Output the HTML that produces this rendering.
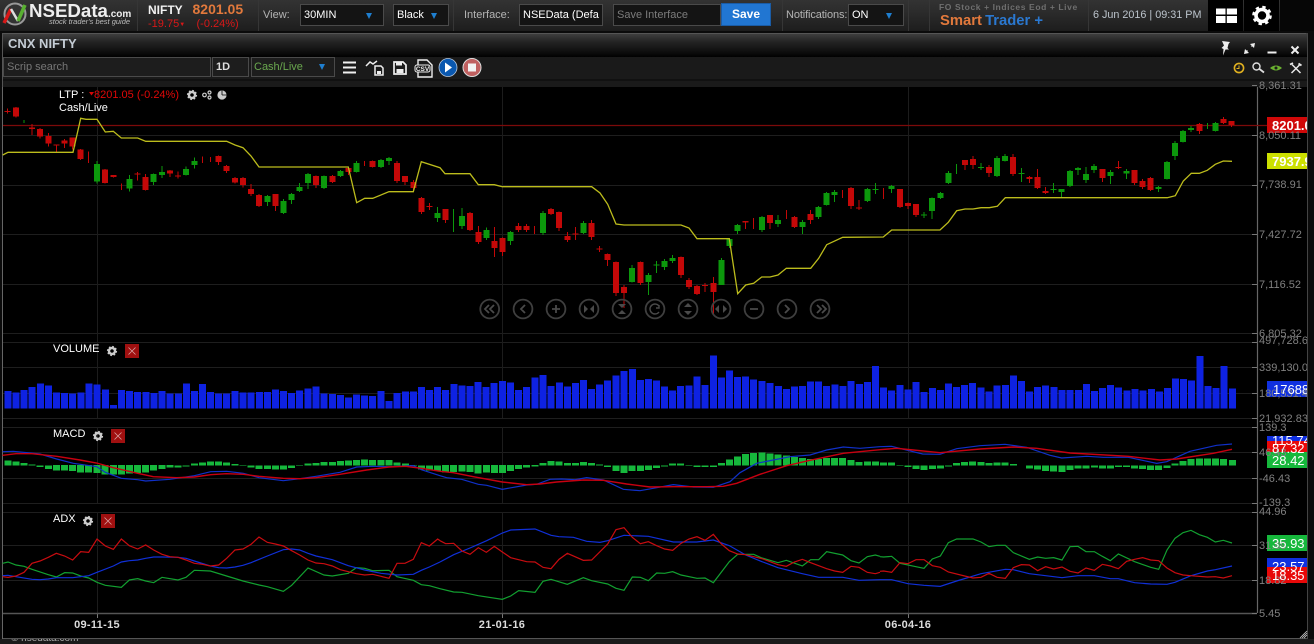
<!DOCTYPE html>
<html>
<head>
<meta charset="utf-8">
<title>NSEData Smart Trader</title>
<style>
html,body{margin:0;padding:0;width:1314px;height:644px;overflow:hidden;background:#0b0b0b;font-family:"Liberation Sans",Arial,sans-serif;font-size:11px;color:#fff}
.a{position:absolute;white-space:nowrap}
#hd{position:absolute;left:0;top:0;width:1314px;height:31px;background:linear-gradient(#333 0,#2a2a2a 45%,#1d1d1d 100%)}
.sep{position:absolute;top:0;width:1px;height:31px;background:#363636}
.box{position:absolute;box-sizing:border-box;background:#141414;border:1px solid #4a4a4a;overflow:hidden;white-space:nowrap;line-height:20px;padding-left:3px;color:#fff;font-size:11px}
.arr{position:absolute;width:0;height:0;border-left:3.5px solid transparent;border-right:3.5px solid transparent;border-top:6px solid #1f7fd0}
.lb{position:absolute;color:#b4b4b4;font-size:11px;line-height:14px;white-space:nowrap}
svg text{font-family:"Liberation Sans",Arial,sans-serif}
</style>
</head>
<body>
<div id="hd"></div>
<div class="sep" style="left:137px"></div>
<div class="sep" style="left:258px"></div>
<div class="sep" style="left:453px"></div>
<div class="sep" style="left:782px"></div>
<div class="sep" style="left:908px"></div>
<div class="sep" style="left:929px"></div>
<div class="sep" style="left:1088px"></div>
<div class="a" style="left:1208px;top:0;width:35px;height:31px;background:#000"></div>
<div class="a" style="left:1244px;top:0;width:35px;height:31px;background:#000"></div>
<div class="a" style="left:1280px;top:0;width:34px;height:31px;background:#060606"></div>

<svg class="a" style="left:0;top:0" width="30" height="30" viewBox="0 0 30 30">
<circle cx="15" cy="14" r="10.5" fill="#333" stroke="#999" stroke-width="2"/>
<path d="M4 23L11 9" stroke="#d81818" stroke-width="3.5" fill="none"/>
<path d="M11 9L18 21" stroke="#ddd" stroke-width="2.5" fill="none"/>
<path d="M18 21L25 5" stroke="#58b030" stroke-width="3.5" fill="none"/>
</svg>
<div class="a" style="left:29px;top:0;font-weight:bold;font-size:18.7px;line-height:22px;color:#eee">NSEData<span style="font-size:10px">.com</span></div>
<div class="a" style="left:49px;top:17px;font-style:italic;font-size:7.5px;line-height:10px;color:#bbb">stock trader's best guide</div>

<div class="a" style="left:148px;top:3px;font-weight:bold;font-size:12px;line-height:14px;color:#f2f2f2">NIFTY</div>
<div class="a" style="left:192.5px;top:1px;font-weight:bold;font-size:14px;line-height:17px;color:#e2793c">8201.05</div>
<div class="a" style="left:148px;top:18px;font-size:11px;line-height:13px;color:#d81818">-19.75<span style="font-size:6px;vertical-align:1px">▼</span></div>
<div class="a" style="left:196.5px;top:18px;font-size:11px;line-height:13px;color:#d81818">(-0.24%)</div>

<div class="lb" style="left:263px;top:8px">View:</div>
<div class="box" style="left:300px;top:4px;width:84px;height:22px">30MIN</div><div class="arr" style="left:366px;top:13px"></div>
<div class="box" style="left:393px;top:4px;width:56px;height:22px">Black</div><div class="arr" style="left:431px;top:13px"></div>
<div class="lb" style="left:464px;top:8px">Interface:</div>
<div class="box" style="left:519px;top:4px;width:84px;height:22px">NSEData (Defa</div>
<div class="box" style="left:613px;top:4px;width:108px;height:22px;color:#7c7c7c">Save Interface</div>
<div class="a" style="left:721px;top:3px;width:50px;height:23px;background:#2176d2;box-sizing:border-box;border:1px solid #1a5ca6;text-align:center;font-weight:bold;font-size:12px;line-height:21px">Save</div>
<div class="lb" style="left:786px;top:8px;letter-spacing:-.12px">Notifications:</div>
<div class="box" style="left:848px;top:4px;width:56px;height:22px">ON</div><div class="arr" style="left:886px;top:13px"></div>

<div class="a" style="left:939px;top:2px;font-size:8.5px;font-weight:bold;line-height:10px;color:#6f6f6f;letter-spacing:.6px">FO Stock + Indices Eod + Live</div>
<div class="a" style="left:940px;top:12px;font-size:14.8px;font-weight:bold;line-height:18px;color:#e2793c">Smart <span style="color:#2a78d0;margin-left:-1px">Trader +</span></div>
<div class="a" style="left:1093px;top:8px;font-size:10.8px;line-height:14px;color:#bcc4cc">6 Jun 2016 | 09:31 PM</div>

<svg class="a" style="left:1208px;top:0" width="72" height="31" viewBox="1208 0 72 31">
<path d="M1216 8.500h9.500v6h-9.500zM1226.800 8.500h10.200v6h-10.200zM1216 16h9.500v7h-9.500zM1226.800 16h10.200v7h-10.200z" fill="#fff"/>
<circle cx="1262" cy="15.500" r="6" fill="none" stroke="#fff" stroke-width="3.600"/>
<circle cx="1262" cy="15.500" r="8.600" fill="none" stroke="#fff" stroke-width="2.400" stroke-dasharray="3.400 3.360"/>
</svg>

<!-- window -->
<div class="a" style="left:2px;top:33px;width:1305px;height:606px;background:#000;box-sizing:border-box;border:1px solid #555;border-right-color:#333"></div>
<div class="a" style="left:3px;top:34px;width:1304px;height:23px;background:linear-gradient(#3e3e3e 0,#262626 30%,#0a0a0a 85%,#000 100%)"></div>
<div class="a" style="left:8px;top:36px;font-weight:bold;font-size:13px;line-height:16px;color:#c4ccd4">CNX NIFTY</div>
<div class="a" style="left:3px;top:57px;width:1304px;height:30px;background:#1a1a1a"></div>
<div class="a" style="left:3px;top:79px;width:1304px;height:2px;background:#111"></div>

<div class="box" style="left:3px;top:57px;width:208px;height:20px;line-height:18px;color:#777;background:#1d1d1d">Scrip search</div>
<div class="box" style="left:212px;top:57px;width:37px;height:20px;line-height:18px;font-weight:bold;color:#ddd;background:#1d1d1d">1D</div>
<div class="box" style="left:251px;top:57px;width:84px;height:20px;line-height:18px;color:#6aa84f;padding-left:2px;background:#1d1d1d">Cash/Live</div><div class="arr" style="left:319px;top:64px"></div>

<svg class="a" style="left:0;top:0" width="1314" height="644" viewBox="0 0 1314 644">
<defs>
<g id="g">
<circle r="3" fill="none" stroke="#ccc" stroke-width="2.400"/>
<circle r="4.400" fill="none" stroke="#ccc" stroke-width="1.400" stroke-dasharray="1.700 1.760"/>
</g>
<g id="x">
<rect width="14" height="14" fill="#a01010"/>
<path d="M3.500 3.500L10.500 10.500M10.500 3.500L3.500 10.500" stroke="#d8a0a0" stroke-width=".8"/>
</g>
</defs>

<!-- toolbar icons -->
<path d="M343 62.500h13M343 67.500h13M343 72.500h13" stroke="#f0f0f0" stroke-width="2"/>
<path d="M366 66l4-4 3 2 4-3" stroke="#eee" stroke-width="1.500" fill="none"/>
<path d="M375 66h6l2 2v7h-8z" fill="none" stroke="#eee" stroke-width="1.500"/><rect x="377" y="71" width="4" height="3" fill="#eee"/>
<path d="M394 62h9l3 3v9h-12z" fill="none" stroke="#eee" stroke-width="1.700"/><rect x="396" y="62" width="6" height="3.500" fill="#eee"/><rect x="396.500" y="69" width="7" height="4" fill="#eee"/>
<path d="M418 60h9l5 5v12h-14z" fill="none" stroke="#eee" stroke-width="1.400"/>
<rect x="415" y="65" width="15" height="7" rx="2" fill="#1a1a1a" stroke="#eee"/>
<text x="422.500" y="71" font-size="6.500" font-weight="bold" fill="#eee" text-anchor="middle">CSV</text>
<circle cx="448" cy="67.500" r="9" fill="#0a58b0" stroke="#b8c8dc" stroke-width=".8"/><path d="M445 62.500l7 5-7 5z" fill="#fff"/>
<circle cx="472" cy="67.500" r="9" fill="#c06060" stroke="#ddd" stroke-width="1"/><rect x="468" y="63.500" width="8" height="8" fill="#f2f2f2"/>

<!-- titlebar icons -->
<path d="M1222 41l8 1-1.500 2-1 4 1.500 1.500-3.500 0-2.500 6 .5-6.500-2-1 2.500-2.500z" fill="#eee"/>
<path d="M1244 54l1-5 4 4zM1255 43l-1 5-4-4z" fill="#eee"/><path d="M1245.500 52.500l2-2M1253.500 44.500l-2 2" stroke="#eee" stroke-width="1.200"/>
<path d="M1267.500 52.500h9" stroke="#eee" stroke-width="2"/>
<path d="M1291.500 46.500l7 7M1298.500 46.500l-7 7" stroke="#eee" stroke-width="2"/>

<!-- right tool icons -->
<circle cx="1239" cy="68" r="4.600" fill="none" stroke="#e0b020" stroke-width="1.600"/><path d="M1239 65.500V68.500H1236.500" stroke="#e0b020" fill="none"/>
<circle cx="1256.500" cy="66.500" r="3.500" fill="none" stroke="#ddd" stroke-width="1.400"/><path d="M1259.500 69l4.500 3.500" stroke="#ddd" stroke-width="1.800"/>
<path d="M1270 68q6-5 12 0q-6 5-12 0z" fill="#6ab030"/><circle cx="1276" cy="68" r="1.500" fill="#1a1a1a"/>
<path d="M1292 64.500l8.500 8.500M1300 64.500l-8.500 8.500" stroke="#e8e8e8" stroke-width="1.500" fill="none"/><path d="M1290 64.500l3-1.500M1298.500 63.500l3 2" stroke="#e8e8e8" stroke-width="1.800"/>

<!-- chart background -->
<rect x="3" y="87" width="1304" height="551" fill="#000"/>
<path d="M3 135.500H1252M3 185.500H1252M3 234.500H1252M3 284.500H1252M3 333.500H1252M3 342.500H1252M3 367.500H1252M3 393.500H1252M3 418.500H1252M3 427.500H1252M3 452.500H1252M3 478.500H1252M3 503.500H1252M3 512.500H1252M3 545.500H1252M3 580.500H1252" stroke="#1e1e1e" stroke-width="1"/>
<path d="M97.500 87V418M97.500 427V503M97.500 512V613M502.500 87V418M502.500 427V503M502.500 512V613M908.500 87V418M908.500 427V503M908.500 512V613" stroke="#1c1c1c" stroke-width="1"/>
<path d="M97.500 613V618M502.500 613V618M908.500 613V618" stroke="#777"/>
<path d="M2.500 87V639" stroke="#666"/>
<path d="M3 613.500H1257" stroke="#555" stroke-width="1.500"/>
<path d="M1257.500 87V613" stroke="#666" stroke-width="1.200"/>
<path d="M1252 85.500h5M1252 135.500h5M1252 185.500h5M1252 234.500h5M1252 284.500h5M1252 333.500h5M1252 342.500h5M1252 367.500h5M1252 393.500h5M1252 418.500h5M1252 427.500h5M1252 452.500h5M1252 478.500h5M1252 503.500h5M1252 512.500h5M1252 545.500h5M1252 580.500h5M1252 613.500h5" stroke="#777"/>

<path d="M3 125.500H1267" stroke="#7c0a0a" stroke-width="1.200"/>

<!-- candles panel 1 -->
<g transform="translate(0,100) scale(.33333)" fill="none" shape-rendering="crispEdges">
<path stroke="#c40808" stroke-width="3" d="M23 25V41M48 21V53M96 72V105M120 84V116M145 99V140M169 133V157M194 117V144M218 112V148M242 147V180M266 155V189M315 207V251M340 225V233M364 251V270M413 216V242M437 222V272M510 210V231M534 214V236M607 170V189M631 171V186M656 167V195M680 195V219M705 231V251M729 231V263M753 252V288M777 282V321M826 282V333M948 226V264M997 225V249M1045 201V225M1094 183V198M1118 181V203M1191 183V249M1215 228V255M1240 240V276M1264 291V342M1288 309V330"/>
<path stroke="#c40808" stroke-width="18" d="M48 22V50M96 82V87M120 87V110M145 108V131M169 133V136M194 122V131M218 113V140M242 148V177M315 209V249M340 225V231M413 221V224M437 231V270M510 212V221M534 226V229M656 168V186M680 198V213M705 234V248M729 234V255M753 267V282M777 285V318M826 282V318M948 228V255M997 228V246M1045 204V216M1118 183V201M1191 189V243M1215 228V246M1240 246V264M1264 294V336M1288 318V321M23 33V36"/>
<path stroke="#0c980c" stroke-width="3" d="M72 60V69M291 183V251M388 225V275M461 220V255M486 198V234M558 200V227M583 173V206M802 285V318M850 297V342M875 279V312M899 249V276M924 219V267M972 226V267M1021 210V231M1069 183V217M1143 177V204M1167 171V195M1313 321V366"/>
<path stroke="#0c980c" stroke-width="18" d="M291 192V245M388 237V266M461 222V246M486 216V225M558 207V225M583 183V195M802 288V306M850 303V339M875 282V300M899 261V273M924 222V249M972 228V264M1021 213V228M1069 189V216M1143 180V201M1167 174V183M1313 339V354"/>
</g>
<!-- candles panel 2 -->
<g transform="translate(440,170) scale(.33333)" fill="none" shape-rendering="crispEdges">
<path stroke="#c40808" stroke-width="3" d="M17 117V159M90 126V183M115 168V222M163 171V261M187 202V258M236 159V186M260 162V186M284 168V192M333 114V135M357 124V183M382 186V216M406 171V210M455 150V210M479 228V246M503 251V288M528 275V378M552 345V414M601 275V345M723 260V324M747 324V357M771 345V375M795 339V366M820 321V432M917 153V177M941 144V177M990 135V177M1039 120V147M1063 138V174M1111 120V162M1208 60V84M1233 51V117M1257 90V120"/>
<path stroke="#c40808" stroke-width="18" d="M17 117V150M90 129V180M115 186V216M163 213V234M187 204V246M236 168V180M260 168V180M333 117V132M357 126V174M382 198V210M406 191V194M455 159V201M479 235V238M503 252V270M528 276V369M552 351V369M601 276V339M723 261V315M747 330V351M771 348V372M795 345V348M820 339V366M917 153V158M990 135V159M1063 141V171M1111 132V150M1233 54V108M1257 112V115"/>
<path stroke="#0c980c" stroke-width="3" d="M41 117V186M66 114V177M139 172V210M212 183V225M309 123V195M430 153V192M576 285V337M625 309V375M649 273V309M674 267V300M698 255V279M844 264V345M868 204V234M893 162V192M966 138V186M1014 135V171M1087 150V192M1136 108V147M1160 66V106M1184 60V96M1282 54V96M1306 39V72"/>
<path stroke="#0c980c" stroke-width="18" d="M66 138V168M139 180V204M212 186V213M309 129V189M430 159V189M576 294V336M625 315V336M649 283V286M674 273V291M698 264V273M844 270V345M868 207V228M893 165V183M966 141V180M1014 150V162M1087 156V171M1136 111V141M1160 69V105M1184 66V75M1282 57V93M1306 57V60"/>
</g>
<!-- candles panel 3 -->
<g transform="translate(880,90) scale(.33333)" fill="none" shape-rendering="crispEdges">
<path stroke="#c40808" stroke-width="3" d="M11 294V327M60 297V354M84 337V357M108 342V381M255 210V240M279 198V237M327 225V261M399 192V258M448 258V279M472 237V297M497 291V312M667 237V276M715 213V237M764 240V285M788 267V297M812 261V303M958 99V132M1030 81V102M1055 93V111"/>
<path stroke="#c40808" stroke-width="18" d="M60 297V351M84 339V348M108 342V375M255 210V225M279 207V225M327 231V249M399 201V252M448 261V267M472 261V294M497 303V309M667 237V264M715 231V234M764 240V279M788 273V291M812 264V300M958 102V123M1030 87V99M1055 93V105"/>
<path stroke="#0c980c" stroke-width="3" d="M35 285V309M132 366V384M156 322V387M181 306V327M205 243V282M229 222V252M303 219V240M351 198V261M375 192V214M424 234V276M521 279V309M545 297V321M570 240V291M594 231V255M618 231V279M642 222V249M691 240V282M740 237V267M836 288V306M861 213V268M885 153V210M909 120V157M933 108V126M982 99V117M1006 96V124"/>
<path stroke="#0c980c" stroke-width="18" d="M35 288V297M132 373V376M156 324V363M181 309V324M205 249V279M303 231V234M351 204V258M375 198V213M424 249V252M521 297V300M545 297V306M570 243V288M594 234V240M618 252V270M642 228V240M691 246V258M740 243V251M836 291V297M861 216V267M885 159V198M909 123V156M933 114V120M1006 99V123"/>
</g>

<!-- yellow line -->
<polyline fill="none" stroke="#bcbc1c" stroke-width="1.300" points="2.700,155 8,152.300 73,152.300 80.700,118.300 86,119.300 97,119.300 105.300,132 113.300,131.300 121.300,138 137.700,138 145.700,141.300 226.700,141.300 235,145 243,147.700 251,156 259,167 348.300,167 356.700,202.700 364.700,198.300 372.700,198.300 389,191.700 413.300,191.700 421.300,161.700 440,167.700 445,173.700 470,173.700 478.300,184.700 494.300,184.700 502.300,186.700 591.700,186.700 600,193 607.700,204.300 616,224 624,225 681,225 689,228 697,238.700 729.300,238.700 737.700,293.700 745.700,285 753.700,283.300 761.700,277 770,277 778,275 786.300,268.300 810.700,268.300 818.700,258.300 826.700,244.700 842.700,237.300 883.300,237 891.700,230 940,230 948.300,222.300 956.700,210.700 965,209 973,209 981,207.700 989.300,207.700 997.300,206.300 1005.300,197.700 1167.300,197.700 1175.300,195.700 1183.300,181 1191.300,173.300 1199.300,173.300 1207.300,170.300 1215.300,164.300 1223.300,161 1232,161.300"/>

<!-- nav buttons -->
<g fill="none" stroke="#3f3f3f" stroke-width="1.800">
<circle cx="489.700" cy="309" r="9.400"/><circle cx="523" cy="309" r="9.400"/><circle cx="556" cy="309" r="9.400"/><circle cx="589" cy="309" r="9.400"/><circle cx="622" cy="309" r="9.400"/><circle cx="655" cy="309" r="9.400"/><circle cx="688" cy="309" r="9.400"/><circle cx="721" cy="309" r="9.400"/><circle cx="754" cy="309" r="9.400"/><circle cx="787" cy="309" r="9.400"/><circle cx="820" cy="309" r="9.400"/>
<path stroke="#4a4a4a" d="M489 305l-4 4 4 4M494 305l-4 4 4 4M525 305l-4 4 4 4M556 305v8M552 309h8M750 309h8M785 305l4 4-4 4M817 305l4 4-4 4M822 305l4 4-4 4"/>
<path stroke="#4a4a4a" stroke-width="1.400" d="M659 306a5 5 0 1 0 0 6M659 305v3h-3"/>
</g>
<g fill="#4a4a4a">
<path d="M584 305l4 4-4 4zM594 305l-4 4 4 4zM618 304h8l-4 4zM618 314h8l-4-4zM684 307l4-4 4 4zM684 311l4 4 4-4zM719 305l-4 4 4 4zM723 305l4 4-4 4z"/>
</g>

<!-- volume -->
<g transform="translate(0,335) scale(.33333)" fill="none" stroke="#0e22e2" stroke-width="21" shape-rendering="crispEdges">
<path d="M24 220V168M48 220V173M72 220V165M96 220V156M121 220V146M145 220V152M170 220V173M194 220V174M218 220V176M243 220V173M267 220V145M291 220V148M316 220V163M340 220V210M365 220V165M389 220V168M413 220V171M438 220V171M462 220V174M486 220V168M510 220V175M535 220V175M559 220V145M583 220V168M608 220V147M632 220V171M656 220V175M680 220V176M705 220V168M729 220V172M753 220V173M778 220V171M802 220V171M826 220V163M851 220V168M875 220V174M899 220V167M924 220V160M948 220V155M972 220V176M997 220V177M1021 220V180M1045 220V187M1069 220V178M1094 220V181M1118 220V183M1143 220V168M1167 220V198M1191 220V174M1216 220V170M1240 220V170M1264 220V156M1288 220V165M1313 220V156"/>
</g>
<g transform="translate(440,335) scale(.33333)" fill="none" stroke="#0e22e2" stroke-width="21" shape-rendering="crispEdges">
<path d="M17 220V165M42 220V147M66 220V152M90 220V153M114 220V141M138 220V156M162 220V144M187 220V138M211 220V142M236 220V165M260 220V156M285 220V127M309 220V120M333 220V153M358 220V142M382 220V155M406 220V144M430 220V135M455 220V162M479 220V148M503 220V137M528 220V121M552 220V108M577 220V102M601 220V135M625 220V132M650 220V137M674 220V155M698 220V167M722 220V153M747 220V152M771 220V124M795 220V150M820 220V62M844 220V127M868 220V106M893 220V126M917 220V125M941 220V133M966 220V138M990 220V144M1015 220V153M1039 220V162M1063 220V154M1087 220V153M1112 220V139M1136 220V140M1160 220V153M1185 220V149M1209 220V153M1233 220V138M1258 220V147M1282 220V141M1307 220V93"/>
</g>
<g transform="translate(880,335) scale(.33333)" fill="none" stroke="#0e22e2" stroke-width="21" shape-rendering="crispEdges">
<path d="M11 220V157M35 220V167M60 220V150M84 220V163M108 220V141M132 220V171M157 220V159M181 220V165M205 220V145M230 220V156M254 220V150M278 220V144M303 220V157M327 220V170M351 220V151M376 220V150M400 220V121M424 220V138M449 220V170M473 220V156M497 220V152M522 220V156M546 220V165M570 220V165M595 220V165M619 220V147M643 220V168M668 220V159M692 220V150M716 220V157M741 220V166M765 220V162M789 220V166M814 220V162M838 220V170M862 220V159M887 220V131M911 220V132M935 220V136M960 220V63M984 220V153M1008 220V159M1032 220V93M1057 220V161"/>
</g>

<!-- macd histogram -->
<g transform="translate(0,335) scale(.33333)" fill="none" stroke="#16b83c" stroke-width="21" shape-rendering="crispEdges">
<path d="M24 392V377M48 392V380M72 392V384M96 392V388M120 392V396M145 392V402M169 390V406M194 390V407M218 390V408M242 390V412M266 390V413M291 390V414M315 390V418M340 390V418M364 390V418M388 390V416M413 390V414M437 390V412M461 390V407M486 390V402M510 390V398M534 392V397M558 392V395M583 392V385M607 392V383M631 392V380M656 392V380M680 392V382M705 392V387M729 392V390M753 392V397M777 392V402M802 392V402M826 392V404M850 392V403M875 392V399M899 392V390M924 392V385M948 392V384M972 392V381M997 392V381M1021 392V378M1045 392V377M1069 392V375M1094 392V373M1118 392V375M1143 392V375M1167 392V375M1191 392V382M1216 392V386M1240 392V390M1264 392V403M1288 392V406M1313 392V408"/>
</g>
<g transform="translate(440,335) scale(.33333)" fill="none" stroke="#16b83c" stroke-width="21" shape-rendering="crispEdges">
<path d="M17 390V412M41 390V411M66 390V410M90 390V411M114 390V415M139 390V412M163 390V414M187 390V414M212 390V408M236 390V402M260 390V398M285 390V395M309 392V384M333 392V378M357 392V379M382 392V384M406 392V384M430 392V381M455 392V384M479 392V388M503 392V396M528 392V408M552 392V414M576 392V408M601 392V408M625 392V405M650 392V399M674 392V394M698 392V385M722 392V386M747 392V390M771 392V396M795 392V396M820 392V396M844 392V384M868 392V373M893 392V364M917 392V357M941 392V354M966 392V353M990 392V356M1014 392V358M1039 392V361M1063 392V366M1087 392V369M1111 392V372M1136 392V372M1160 392V369M1184 392V369M1208 392V369M1233 392V375M1257 392V381M1282 392V380M1306 392V380"/>
</g>
<g transform="translate(880,335) scale(.33333)" fill="none" stroke="#16b83c" stroke-width="21" shape-rendering="crispEdges">
<path d="M11 392V382M35 392V382M60 392V390M84 392V396M108 392V402M132 392V405M157 392V402M181 392V400M205 392V394M230 392V384M254 392V381M278 392V380M303 392V381M327 392V384M351 392V382M375 392V382M400 392V387M424 392V391M448 392V400M473 392V404M497 392V408M521 392V410M546 392V411M570 392V405M594 392V401M618 392V400M643 392V398M667 392V400M691 392V400M715 392V396M740 392V396M764 392V400M788 392V402M812 392V405M836 392V405M861 392V399M885 392V386M909 392V378M933 392V372M958 392V371M982 392V370M1006 392V370M1030 392V372M1057 392V375"/>
</g>

<!-- macd lines -->
<g transform="translate(0,335) scale(.33333)" fill="none" stroke-width="3.600">
<polyline stroke="#1030c8" points="8,350 40,349 90,354 120,357 170,372 220,385 290,395 316,412 364,430 413,434 437,438 510,433 583,422 632,410 680,409 730,415 777,428 850,437 900,431 948,424 1020,412 1070,396 1118,394 1167,395 1240,392 1264,404 1320,422"/>
<polyline stroke="#c80010" stroke-width="4.200" points="8,361 48,356 96,356 170,364 240,375 290,384 340,398 413,415 460,425 530,428 583,426 632,419 680,416 730,418 777,424 850,430 900,431 948,428 1020,418 1100,405 1167,396 1216,394 1264,400 1320,409"/>
</g>
<g transform="translate(440,335) scale(.33333)" fill="none" stroke-width="3.600">
<polyline stroke="#1030c8" points="0,422 20,428 65,433 115,448 140,451 187,463 260,450 290,448 330,433 365,432 405,434 440,428 490,435 550,463 600,467 640,460 700,449 760,456 820,457 870,440 900,413 950,385 1000,375 1050,365 1110,360 1160,345 1210,336 1260,340 1320,335"/>
<polyline stroke="#c80010" stroke-width="4.200" points="0,409 40,413 100,425 187,441 260,449 300,447 350,441 430,435 490,436 560,447 630,456 700,455 800,455 850,454 890,445 960,418 1040,392 1110,376 1210,355 1320,344"/>
</g>
<g transform="translate(880,335) scale(.33333)" fill="none" stroke-width="3.600">
<polyline stroke="#1030c8" points="0,335 35,334 75,344 128,357 180,358 230,341 300,332 375,328 440,337 510,361 545,369 620,364 670,367 745,367 830,385 860,380 930,349 1010,331 1056,327"/>
<polyline stroke="#c80010" stroke-width="4.200" points="0,344 50,340 100,345 180,353 300,342 400,336 470,340 570,354 745,364 840,375 890,372 1000,355 1056,343"/>
</g>

<!-- adx lines -->
<g transform="translate(0,495) scale(.33333)" fill="none" stroke-width="3.600">
<polyline stroke="#12a030" points="8,205 24,201 48,210 72,214 96,223 145,239 169,246 194,233 218,234 242,243 266,249 291,262 316,271 364,277 388,255 413,251 437,258 461,263 486,247 534,255 558,247 583,226 631,228 680,243 729,258 777,270 802,275 850,289 875,271 924,219 972,240 997,243 1045,235 1069,218 1094,220 1118,227 1167,226 1191,245 1240,256 1264,269 1288,272 1320,281"/>
<polyline stroke="#1030d8" points="8,242 24,241 48,245 96,253 120,254 145,252 169,248 218,248 266,242 291,232 340,213 364,201 388,197 413,195 437,190 461,186 486,186 534,187 558,190 583,198 631,213 656,218 680,219 705,216 729,211 753,203 802,183 850,164 875,162 899,165 924,175 948,183 997,194 1045,212 1094,225 1143,235 1191,240 1240,238 1264,226 1288,216 1320,201"/>
<polyline stroke="#c80c10" points="8,245 24,247 48,243 72,232 96,205 120,198 145,187 169,175 194,183 218,195 242,170 266,172 291,132 316,153 340,163 364,132 388,152 413,162 437,150 461,165 486,178 510,185 534,187 558,195 583,205 607,208 631,213 656,210 680,190 705,165 729,162 753,148 777,126 802,142 826,147 850,153 875,167 899,180 924,195 948,204 972,206 997,213 1021,224 1045,230 1069,236 1094,240 1118,238 1143,244 1167,250 1191,205 1215,205 1240,193 1264,143 1288,153 1313,132 1320,137"/>
</g>
<g transform="translate(440,495) scale(.33333)" fill="none" stroke-width="3.600">
<polyline stroke="#12a030" points="0,281 41,291 66,292 115,302 187,313 212,303 236,287 285,292 309,259 333,253 382,268 430,248 455,257 503,267 528,280 552,286 577,246 601,247 625,257 650,234 674,235 698,230 723,240 771,250 795,249 820,263 868,200 893,178 941,178 966,189 1014,203 1039,196 1087,213 1112,194 1136,194 1160,170 1208,180 1233,197 1257,204 1282,185 1306,180 1320,184"/>
<polyline stroke="#1030d8" points="0,201 41,179 90,159 140,137 187,114 212,105 285,102 333,121 357,125 400,127 440,139 480,142 503,137 552,121 625,124 700,141 770,141 820,135 868,152 917,180 966,200 1014,218 1087,236 1136,247 1208,247 1257,256 1320,254"/>
<polyline stroke="#c80c10" points="0,137 17,146 41,145 66,168 90,178 115,158 139,172 163,154 187,171 212,188 260,200 285,201 309,217 333,221 357,193 382,175 430,196 455,195 503,147 528,104 552,98 577,127 601,146 625,140 650,152 674,162 698,166 723,145 747,132 771,125 795,136 820,118 844,147 868,167 893,177 917,179 966,191 1014,209 1039,214 1063,201 1087,193 1112,203 1136,212 1160,221 1184,228 1208,232 1233,214 1257,217 1282,232 1306,236 1320,232"/>
</g>
<g transform="translate(880,495) scale(.33333)" fill="none" stroke-width="3.600">
<polyline stroke="#12a030" points="0,185 11,186 35,184 60,205 108,215 132,220 157,192 181,183 205,143 230,132 279,132 303,141 327,155 351,151 376,151 400,173 448,193 473,186 497,190 521,188 546,195 570,155 594,154 618,170 643,170 667,184 691,197 715,177 764,200 812,217 836,223 861,165 885,130 909,113 933,106 958,119 982,127 1006,141 1030,136 1056,144"/>
<polyline stroke="#1030d8" points="0,254 35,254 84,266 132,271 181,274 230,258 303,236 376,223 400,224 448,236 497,242 546,248 594,242 643,242 691,251 715,251 764,263 812,267 861,268 885,262 933,242 982,228 1006,224 1056,213"/>
<polyline stroke="#c80c10" points="0,229 11,228 35,232 60,203 84,206 108,194 132,194 157,212 181,217 205,231 254,243 279,249 303,247 327,235 351,247 376,250 400,218 424,209 448,210 473,227 497,215 521,222 546,216 570,229 594,234 618,219 643,226 667,208 691,213 715,221 740,199 764,193 788,188 812,195 836,197 861,219 885,233 909,240 933,242 982,246 1006,245 1030,249 1056,242"/>
</g>

<!-- tag boxes -->
<rect x="1267" y="117" width="41" height="16" fill="#d00808"/>
<rect x="1267" y="153" width="41" height="16" fill="#cce000"/>
<rect x="1267" y="381" width="41" height="16" fill="#1030e0"/>
<rect x="1267" y="436" width="41" height="6" fill="#1030e0"/>
<rect x="1267" y="441" width="41" height="11" fill="#e80808"/>
<rect x="1267" y="452" width="41" height="16" fill="#16b83c"/>
<rect x="1267" y="535" width="41" height="16" fill="#16b83c"/>
<rect x="1267" y="558" width="41" height="9.500" fill="#1030e0"/>
<rect x="1267" y="567" width="41" height="16" fill="#e80808"/>

<!-- axis labels -->
<g font-size="11" fill="#808080">
<text x="1259" y="89">8,361.31</text>
<text x="1259" y="139">8,050.11</text>
<text x="1259" y="188">7,738.91</text>
<text x="1259" y="238">7,427.72</text>
<text x="1259" y="288">7,116.52</text>
<text x="1259" y="337">6,805.32</text>
<text x="1259" y="344">497,728.6</text>
<text x="1259" y="371">339,130.0</text>
<text x="1259" y="397">180,531.4</text>
<text x="1259" y="422">21,932.83</text>
<text x="1259" y="431">139.3</text>
<text x="1259" y="456">46.43</text>
<text x="1259" y="482">-46.43</text>
<text x="1259" y="506">-139.3</text>
<text x="1259" y="515">44.96</text>
<text x="1259" y="549">31.89</text>
<text x="1259" y="584">18.82</text>
<text x="1259" y="617">5.45</text>
</g>
<!-- tag text -->
<g font-size="13" fill="#fff">
<text x="1272" y="130" font-weight="bold">8201.05</text>
<text x="1272" y="166" font-weight="bold">7937.91</text>
<text x="1273" y="394">17688</text>
<text x="1272" y="445">115.74</text>
<text x="1272" y="453">87.32</text>
<text x="1272" y="465">28.42</text>
<text x="1272" y="548">35.93</text>
<text x="1272" y="571">23.57</text>
<text x="1272" y="580">18.35</text>
</g>
<rect x="1307" y="33" width="7" height="611" fill="#0b0b0b"/>
<path d="M1307.500 33V639" stroke="#444"/>
<path d="M1302 638l5-5M1304 638l3-3M1300 638l7-7" stroke="#ccc" stroke-width=".8"/>

<!-- overlay labels -->
<g font-size="11" fill="#fff">
<text x="59" y="98">LTP :</text>
<text x="59" y="111">Cash/Live</text>
<text x="53" y="352">VOLUME</text>
<text x="53" y="437">MACD</text>
<text x="53" y="522">ADX</text>
</g>
<path d="M89 92h5l-2.500 3.500z" fill="#d80808"/>
<text x="94" y="98" font-size="11" fill="#e00808">8201.05 (-0.24%)</text>
<use href="#g" x="192" y="95"/>
<circle cx="204.500" cy="95" r="1.800" fill="none" stroke="#ccc" stroke-width="1.200"/><circle cx="209.500" cy="92.500" r="1.500" fill="none" stroke="#ccc" stroke-width="1.200"/><circle cx="209.500" cy="97.500" r="1.500" fill="none" stroke="#ccc" stroke-width="1.200"/>
<circle cx="222" cy="95" r="4.600" fill="#ccc"/><path d="M222 95V90.500M222 95H226.500" stroke="#000" stroke-width=".8"/>
<use href="#g" x="112" y="351"/><use href="#x" x="125" y="344"/>
<use href="#g" x="98" y="436"/><use href="#x" x="111" y="429"/>
<use href="#g" x="88" y="521"/><use href="#x" x="101" y="514"/>

<g font-size="11" font-weight="bold" fill="#dcdcdc" text-anchor="middle" letter-spacing=".3">
<text x="97" y="628">09-11-15</text>
<text x="502" y="628">21-01-16</text>
<text x="908" y="628">06-04-16</text>
</g>
</svg>
<div class="a" style="left:0;top:639px;width:1314px;height:5px;background:#1a1a1a;overflow:hidden"><span class="a" style="left:11px;top:-6px;font-size:10px;line-height:12px;color:#aaa">© nsedata.com</span></div>
</body>
</html>
